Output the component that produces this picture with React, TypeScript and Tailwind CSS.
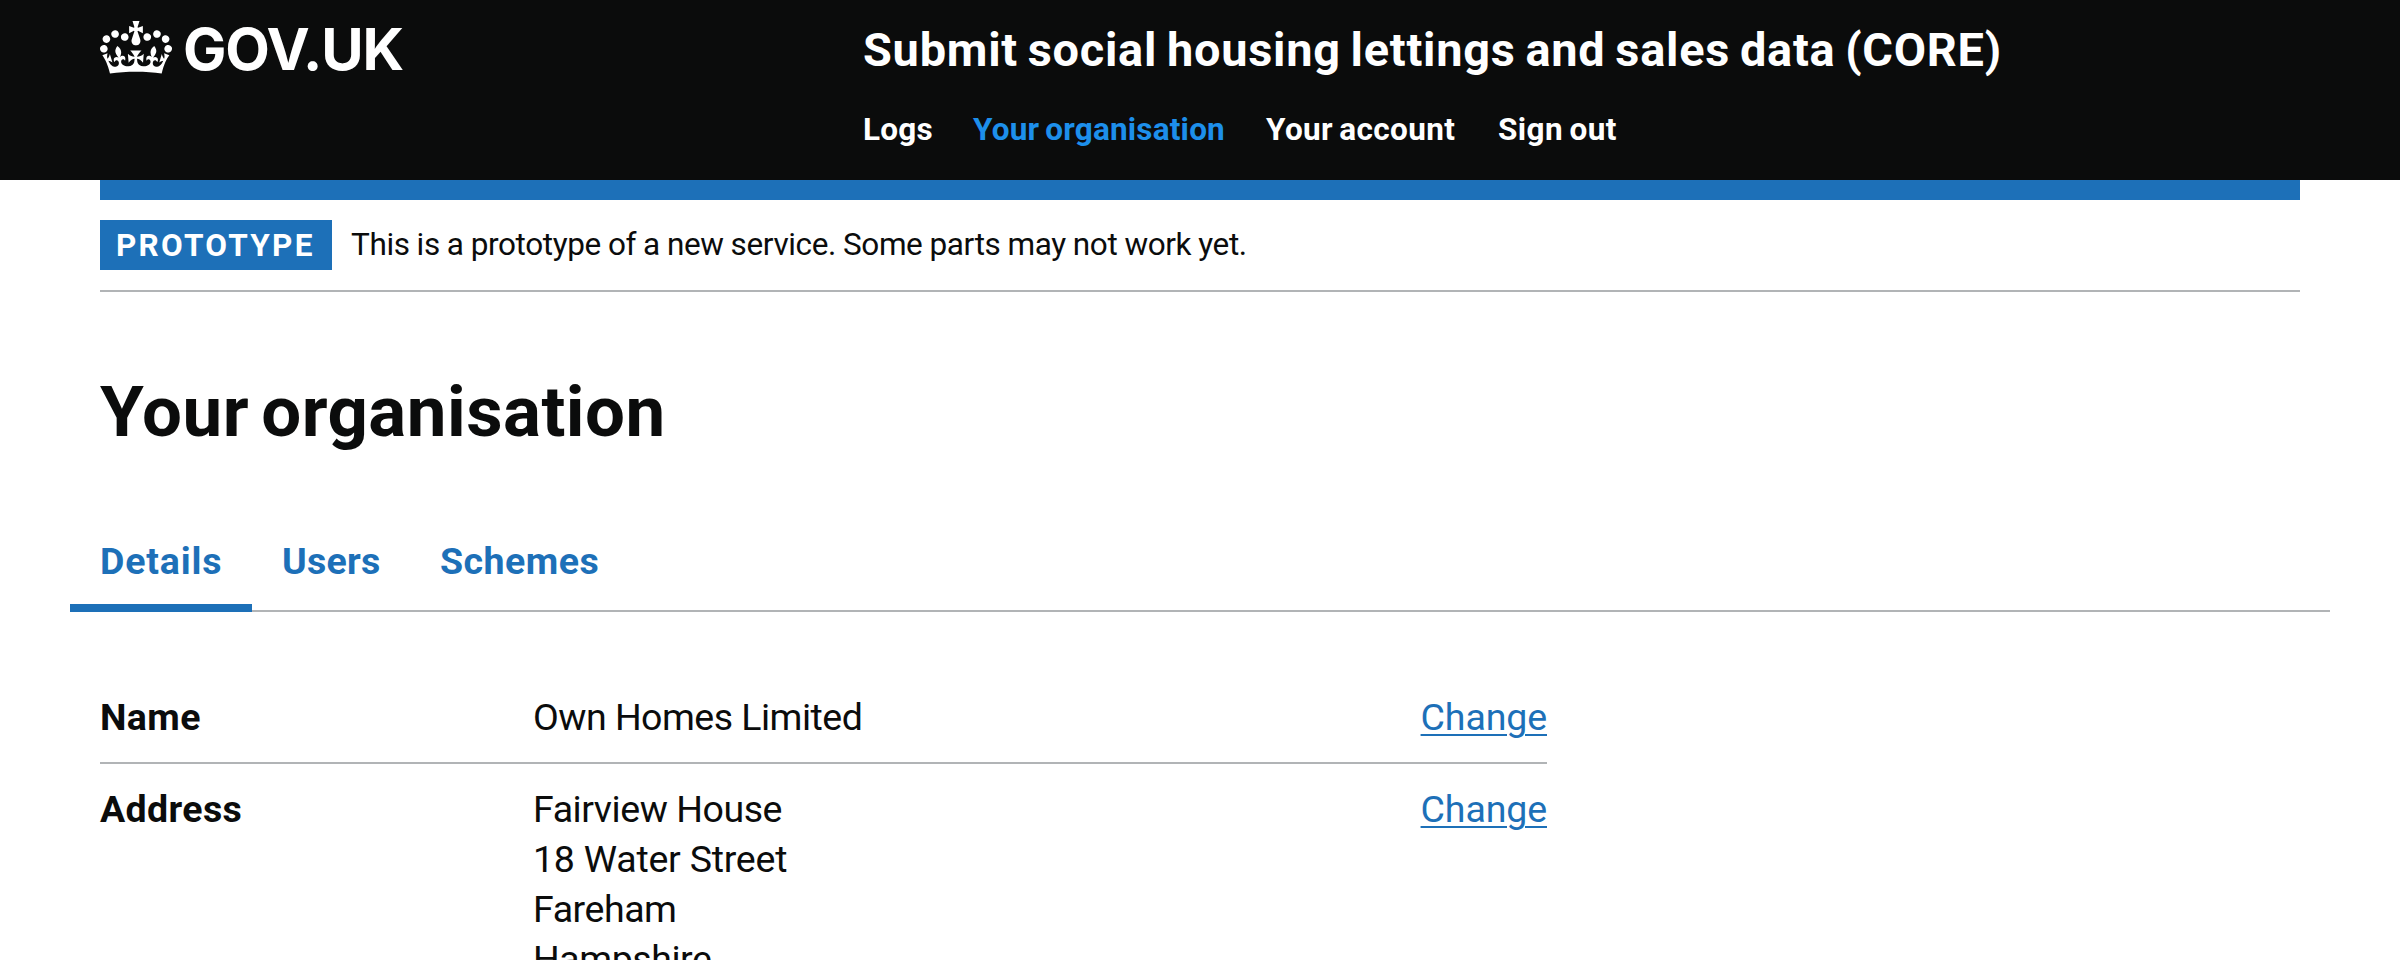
import type { ReactNode } from "react";

function Crown() {
  return (
    <svg viewBox="0 0 132 97" className="h-[53px] w-[72px] shrink-0" fill="currentColor" aria-hidden="true">
      <path
        fillRule="evenodd"
        d="M25 30.2c3.5 1.5 7.7-.2 9.1-3.7 1.5-3.6-.2-7.8-3.9-9.2-3.6-1.4-7.6.3-9.1 3.9-1.4 3.5.3 7.5 3.9 9zM9 39.5c3.6 1.5 7.8-.2 9.2-3.7 1.5-3.6-.2-7.8-3.9-9.1-3.6-1.5-7.6.2-9.1 3.8-1.4 3.5.3 7.5 3.8 9zM4.4 57.2c3.5 1.5 7.7-.2 9.1-3.8 1.5-3.6-.2-7.7-3.9-9.1-3.5-1.5-7.6.3-9.1 3.8-1.4 3.5.3 7.6 3.9 9.1zm38.3-21.4c3.5 1.5 7.7-.2 9.1-3.8 1.5-3.6-.2-7.7-3.9-9.1-3.6-1.5-7.6.3-9.1 3.8-1.3 3.6.4 7.7 3.9 9.1zm64.4-5.6c-3.6 1.5-7.8-.2-9.1-3.7-1.5-3.6.2-7.8 3.8-9.2 3.6-1.4 7.7.3 9.2 3.9 1.3 3.5-.4 7.5-3.9 9zm15.9 9.3c-3.6 1.5-7.7-.2-9.1-3.7-1.5-3.6.2-7.8 3.7-9.1 3.6-1.5 7.7.2 9.2 3.8 1.5 3.5-.3 7.5-3.8 9zm4.7 17.7c-3.6 1.5-7.8-.2-9.2-3.8-1.5-3.6.2-7.7 3.9-9.1 3.6-1.5 7.7.3 9.2 3.8 1.3 3.5-.4 7.6-3.9 9.1zM89.3 35.8c-3.6 1.5-7.8-.2-9.2-3.8-1.4-3.6.2-7.7 3.9-9.1 3.6-1.5 7.7.3 9.2 3.8 1.4 3.6-.3 7.7-3.9 9.1zM69.7 17.7l8.9 4.7V9.3l-8.9 2.8c-.2-.3-.5-.6-.9-.9L72.4 0H59.6l3.5 11.2c-.3.3-.6.5-.9.9l-8.8-2.8v13.1l8.8-4.7c.3.3.6.7.9.9l-5 15.4v.1c-.2.8-.4 1.6-.4 2.4 0 4.1 3.1 7.5 7 8.1h.2c.3 0 .7.1 1 .1.4 0 .7 0 1-.1h.2c4-.6 7.1-4.1 7.1-8.1 0-.8-.1-1.7-.4-2.4V34l-5.1-15.4c.4-.2.7-.6 1-.9zM66 92.8c16.9 0 32.8 1.1 47.1 3.2 4-16.9 8.9-26.7 14-33.5l-9.6-3.4c1 4.9 1.1 7.2 0 10.2-1.5-1.4-3-4.3-4.2-8.7L108.6 76c2.8-2 5-3.2 7.5-3.3-4.4 9.4-10 11.9-13.6 11.2-4.3-.8-6.3-4.6-5.6-7.9 1-4.7 5.7-5.9 8-.5 4.3-8.7-3-11.4-7.6-8.8 7.1-7.2 7.9-13.5 2.1-21.1-8 6.1-8.1 12.3-4.5 20.8-4.7-5.4-12.1-2.5-9.5 6.2 3.4-5.2 7.9-2 7.2 3.1-.6 4.3-6.4 7.8-13.5 7.2-10.3-.9-10.9-8-11.2-13.8 2.5-.5 7.1 1.8 11 7.3L80.2 60c-4.1 4.4-8 5.3-12.3 5.4 1.4-4.4 8-11.6 8-11.6H55.5s6.4 7.2 7.9 11.6c-4.2-.1-8-1-12.3-5.4l1.4 16.4c3.9-5.5 8.5-7.7 10.9-7.3-.3 5.8-.9 12.8-11.1 13.8-7.2.6-12.9-2.9-13.5-7.2-.7-5 3.8-8.3 7.1-3.1 2.7-8.7-4.6-11.6-9.4-6.2 3.7-8.5 3.6-14.7-4.6-20.8-5.8 7.6-5 13.9 2.2 21.1-4.7-2.6-11.9.1-7.7 8.8 2.3-5.5 7.1-4.2 8.1.5.7 3.3-1.3 7.1-5.7 7.9-3.5.7-9-1.8-13.5-11.2 2.5.1 4.7 1.3 7.5 3.3l-4.7-15.4c-1.2 4.4-2.7 7.2-4.3 8.7-1.1-3-.9-5.3 0-10.2l-9.5 3.4c5 6.9 9.9 16.7 14 33.5 14.8-2.1 30.8-3.2 47.7-3.2z"
      />
    </svg>
  );
}

function Header() {
  return (
    <header className="flex h-[180px] bg-[#0b0c0c] pl-[100px] text-white">
      <a className="flex w-[763px] shrink-0 items-start">
        <span className="flex pt-[21px]">
          <Crown />
        </span>
        <span className="ml-[11px] pt-[19px] font-[Inter,sans-serif] text-[57.9px] leading-[60px] font-bold tracking-[-0.019em]">
          GOV.UK
        </span>
      </a>
      <div className="pt-5 font-bold whitespace-nowrap">
        <a className="block text-[46.9px] leading-[60px] tracking-[0.016em] [word-spacing:-0.055em]">
          Submit social housing lettings and sales data (CORE)
        </a>
        <nav className="flex pt-[30px] text-[31.5px] leading-[40px] tracking-[0.006em] [word-spacing:-0.06em]">
          <a className="w-[110px]">Logs</a>
          <a className="w-[293px] text-[#1d8feb]">Your organisation</a>
          <a className="w-[232px] tracking-[0.012em]">Your account</a>
          <a className="tracking-[0.014em]">Sign out</a>
        </nav>
      </div>
    </header>
  );
}

function PhaseBanner() {
  return (
    <div className="mx-[100px] flex h-[112px] items-start border-t-[20px] border-b-2 border-t-[#1d70b8] border-b-[#b1b4b6] pt-5">
      <strong className="h-[50px] w-[232px] bg-[#1d70b8] pt-px pl-4 text-[31.5px] leading-[50px] font-bold tracking-[0.072em] text-white">
        PROTOTYPE
      </strong>
      <span className="ml-[19px] pt-[5px] text-[31.5px] leading-[40px] tracking-[-0.012em] [word-spacing:-0.012em]">
        This is a prototype of a new service. Some parts may not work yet.
      </span>
    </div>
  );
}

function Tabs() {
  return (
    <nav className="mx-[70px] mt-[84px] flex h-[76px] text-[37.5px] leading-[50px] font-bold tracking-[0.013em] text-[#1d70b8] shadow-[inset_0_-2px_0_#b1b4b6]">
      <a className="w-[182px] border-b-8 border-[#1d70b8] pl-[30px] tracking-[0.022em]">Details</a>
      <a className="w-[158px] pl-[30px] tracking-[0.007em]">Users</a>
      <a className="pl-[30px]">Schemes</a>
    </nav>
  );
}

function Row({ label, children }: { label: string; children: ReactNode }) {
  return (
    <div className="flex border-b-2 border-[#b1b4b6] py-5">
      <dt className="w-[433px] font-bold tracking-[0.01em]">{label}</dt>
      <dd className="flex-1">{children}</dd>
      <dd>
        <a className="text-[#1d70b8] underline decoration-2 underline-offset-[4px] tracking-[-0.003em]">Change</a>
      </dd>
    </div>
  );
}

export default function App() {
  return (
    <div className="h-[960px] overflow-hidden bg-white font-[Roboto,sans-serif] text-[#0b0c0c]">
      <Header />
      <PhaseBanner />
      <main>
        <h1 className="mt-20 ml-[100px] text-[70.8px] leading-[80px] font-bold tracking-[0.007em] [word-spacing:-0.085em]">
          Your organisation
        </h1>
        <Tabs />
        <dl className="mt-[60px] ml-[100px] w-[1447px] text-[37.5px] leading-[50px]">
          <Row label="Name">
            <span className="tracking-[-0.014em]">Own Homes Limited</span>
          </Row>
          <Row label="Address">
            <div className="tracking-[-0.012em]">
              <div>Fairview House</div>
              <div className="tracking-[-0.006em]">18 Water Street</div>
              <div>Fareham</div>
              <div>Hampshire</div>
            </div>
          </Row>
        </dl>
      </main>
    </div>
  );
}
